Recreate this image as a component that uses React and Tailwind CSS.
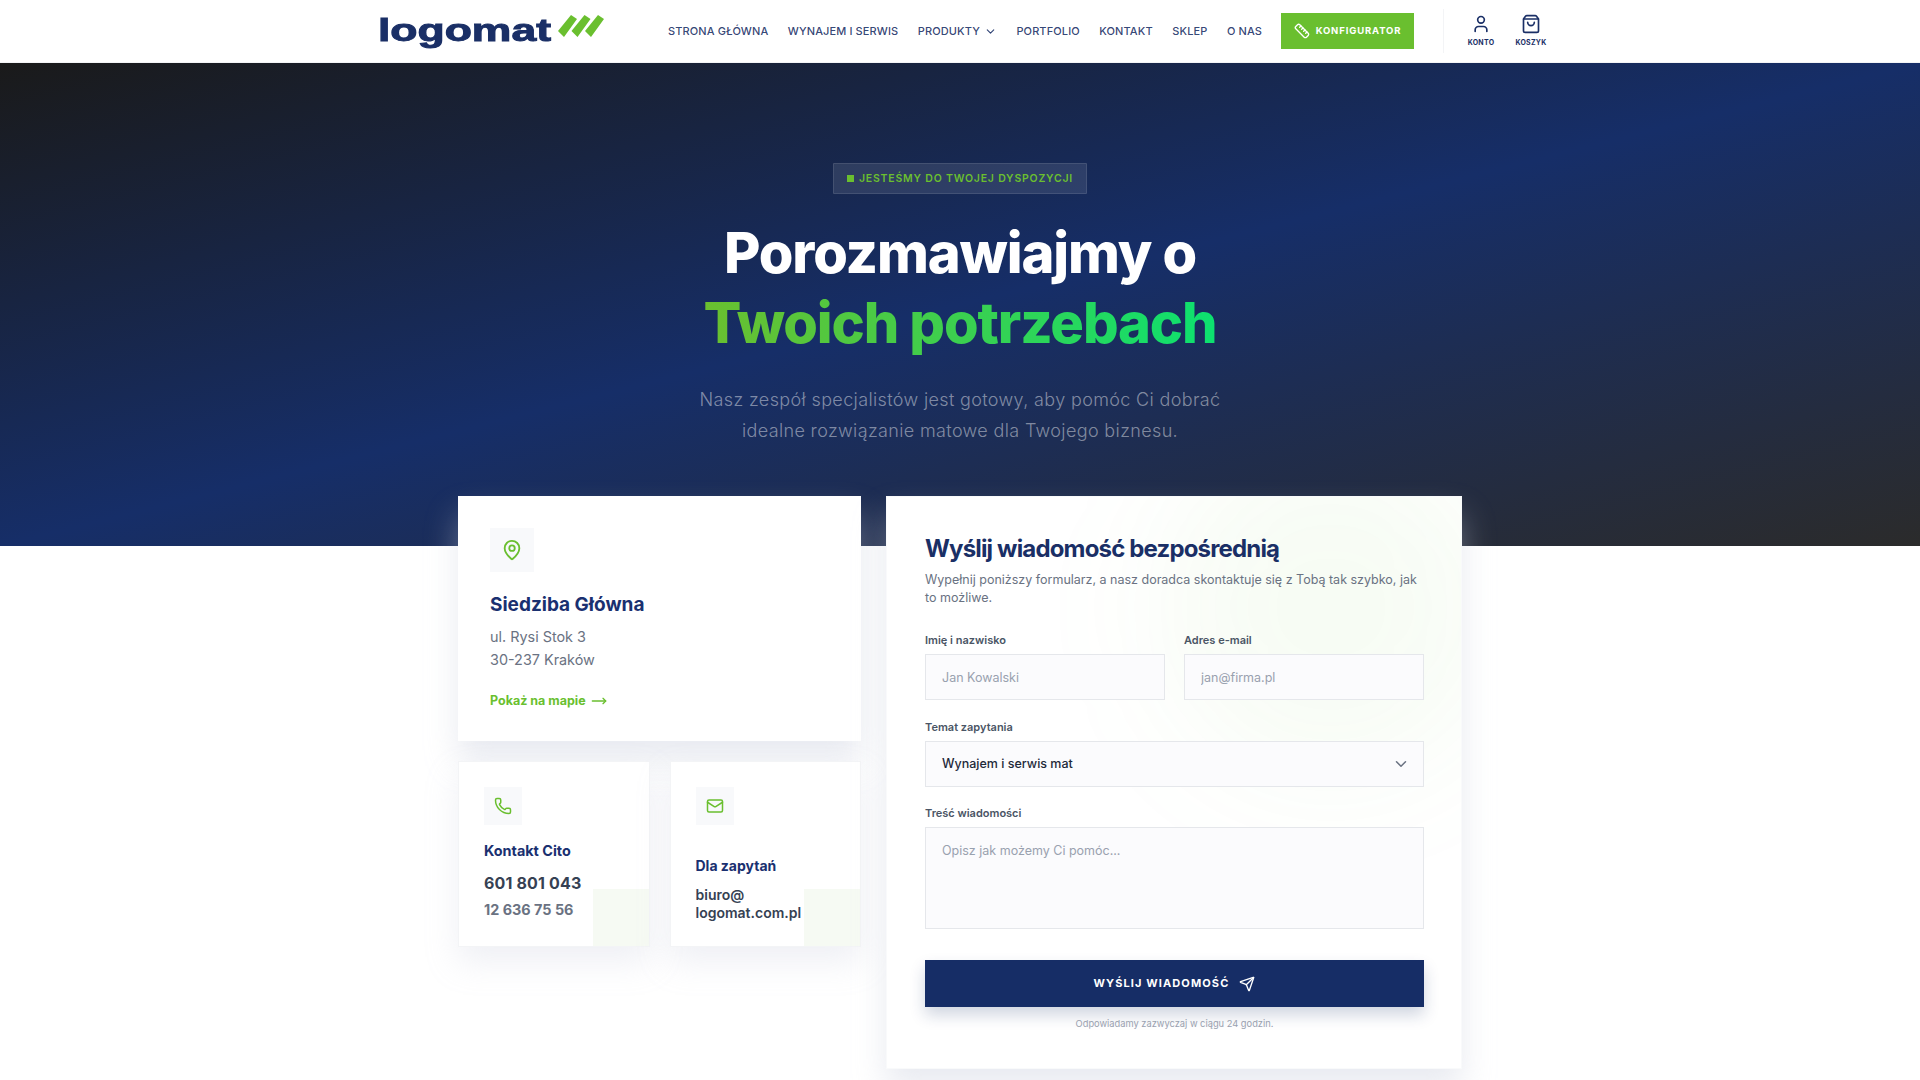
import { ChevronDown, Ruler, User, ShoppingBag, MapPin, MoveRight, Phone, Mail, Send } from "lucide-react";

const links = ["Strona główna", "Wynajem i serwis", "Produkty", "Portfolio", "Kontakt", "Sklep", "O nas"];

function Navbar() {
  return (
    <nav className="h-[63px] bg-white border-b border-gray-100 flex items-center pl-[378px] shrink-0">
      <a className="flex items-center w-[290px] shrink-0 -mt-[3px]">
        <span className="inline-block w-[174px] origin-left scale-x-[1.39] text-[32px] leading-none font-black text-[#1a2f66] [font-family:'Liberation_Sans',sans-serif] [-webkit-text-stroke:1px_#1a2f66]">logomat</span>
        <svg width="46" height="22" viewBox="0 0 46 22" className="ml-[6px] -mt-[7px]">
          <path d="M0 16L13 0l6 4L6 22zM13.500 16l13-16 6 4-13 18zM27 16L40 0l6 4-13 18z" fill="#6abf2f" />
        </svg>
      </a>
      <ul className="flex items-center gap-[19.500px] text-[11px] font-medium text-[#1a2f66]/90 uppercase tracking-[0.01em]">
        {links.map((l) => (
          <li key={l} className="flex items-center gap-1 whitespace-nowrap">
            {l}
            {l === "Produkty" && <ChevronDown size={13} strokeWidth={2} />}
          </li>
        ))}
      </ul>
      <button className="ml-[19px] w-[133px] h-[36px] bg-[#6abf2f] text-white text-[9.500px] font-bold uppercase tracking-[0.09em] flex items-center justify-center gap-[6px]">
        <Ruler size={16} />
        Konfigurator
      </button>
      <div className="ml-[29px] w-px h-[44px] bg-gray-100" />
      <div className="ml-[24px] flex gap-[24px] text-[#1a2f66]">
        <div className="w-[26px] flex flex-col items-center">
          <User size={20} />
          <span className="mt-[4px] text-[7px] font-bold uppercase tracking-[0.04em]">Konto</span>
        </div>
        <div className="w-[26px] flex flex-col items-center">
          <ShoppingBag size={20} />
          <span className="mt-[4px] text-[7px] font-bold uppercase tracking-[0.04em]">Koszyk</span>
        </div>
      </div>
    </nav>
  );
}

function Hero() {
  return (
    <section className="h-[483px] bg-[linear-gradient(to_bottom_right,#1a1a1a,#162e68_50%,#2b2b2b)] flex flex-col items-center pt-[100px] text-center shrink-0">
      <div className="h-[31px] px-[13px] flex items-center border border-white/10 bg-white/10 rounded-[1px] text-[#6abf2f] text-[10.500px] font-semibold uppercase tracking-[0.075em]">
        <span className="w-[7px] h-[7px] bg-[#6abf2f] mr-[5px]" />
        Jesteśmy do Twojej dyspozycji
      </div>
      <h1 className="mt-[24px] text-[56px] leading-[70px] font-extrabold tracking-[-0.02em] text-white">
        Porozmawiajmy o
        <br />
        <span className="bg-[linear-gradient(to_right,#6abf2f,#0ce170)] bg-clip-text text-transparent">Twoich potrzebach</span>
      </h1>
      <p className="mt-[27px] text-[18px] leading-[30.600px] font-light text-white/45 tracking-[0.02em]">
        Nasz zespół specjalistów jest gotowy, aby pomóc Ci dobrać
        <br />
        idealne rozwiązanie matowe dla Twojego biznesu.
      </p>
    </section>
  );
}

function IconBox({ children, big }) {
  return (
    <div className={`bg-[#f8f9fb] flex items-center justify-center text-[#6abf2f] ${big ? "w-[44px] h-[44px]" : "w-[38px] h-[38px]"}`}>
      {children}
    </div>
  );
}

function SmallCard({ icon, children }) {
  return (
    <div className="relative w-[191.500px] h-[186px] bg-white border border-gray-100 shadow-[0_15px_30px_rgba(190,196,215,0.25)] p-[25px] flex flex-col justify-between overflow-hidden">
      <IconBox>{icon}</IconBox>
      <div className="relative z-10">{children}</div>
      <div className="absolute right-0 bottom-0 w-[56px] h-[57px] bg-[#f6faf3]" />
    </div>
  );
}

function ContactColumn() {
  return (
    <div className="w-[403px] flex flex-col gap-[20px]">
      <div className="h-[245px] bg-white shadow-[0_20px_30px_rgba(200,205,220,0.4)] p-[32px]">
        <IconBox big>
          <MapPin size={22} />
        </IconBox>
        <h3 className="mt-[19px] text-[19px] leading-[28px] font-bold text-[#1a3070]">Siedziba Główna</h3>
        <p className="mt-[6px] text-[14.400px] leading-[23px] text-gray-500">
          ul. Rysi Stok 3
          <br />
          30-237 Kraków
        </p>
        <a className="mt-[20px] flex items-center gap-[5px] text-[12.500px] leading-[20px] font-bold text-[#6abf2f]">
          Pokaż na mapie
          <MoveRight size={16} />
        </a>
      </div>
      <div className="flex justify-between">
        <SmallCard icon={<Phone size={18} />}>
          <h4 className="text-[14.400px] leading-[20px] font-bold text-[#1a3070]">Kontakt Cito</h4>
          <p className="mt-[10px] text-[16px] leading-[24px] font-bold text-gray-700 tracking-[0.01em]">601 801 043</p>
          <p className="mt-[4px] text-[14.400px] leading-[22px] font-bold text-gray-500">12 636 75 56</p>
        </SmallCard>
        <SmallCard icon={<Mail size={18} />}>
          <div className="-mb-px">
            <h4 className="text-[14px] leading-[20px] font-bold text-[#1a3070]">Dla zapytań</h4>
            <p className="mt-[10px] text-[14px] leading-[18px] font-semibold text-gray-700">
              biuro@
              <br />
              logomat.com.pl
            </p>
          </div>
        </SmallCard>
      </div>
    </div>
  );
}

const fieldClass = "w-full bg-[#fbfbfd] border border-gray-200 text-[12.500px] outline-none placeholder:text-gray-400 px-[16px] rounded-none";
const labelClass = "block text-[11px] leading-[16px] font-semibold text-gray-600 mb-[6px]";

function ContactForm() {
  return (
    <div className="relative w-[576px] h-[573px] bg-white border border-gray-50 shadow-[0_20px_30px_rgba(200,205,220,0.4)] pl-[38px] pr-[37px] pt-[35px] overflow-hidden">
      <div className="absolute -top-[60px] -right-[40px] w-[340px] h-[340px] rounded-full bg-[#6abf2f]/5 blur-3xl" />
      <div className="relative">
        <h2 className="text-[24px] leading-[34px] font-bold tracking-[-0.035em] text-[#1a2f66]">Wyślij wiadomość bezpośrednią</h2>
        <p className="mt-[5px] text-[12.500px] leading-[18px] text-gray-500">
          Wypełnij poniższy formularz, a nasz doradca skontaktuje się z Tobą tak szybko, jak to możliwe.
        </p>
        <div className="mt-[25px] grid grid-cols-2 gap-x-[19px]">
          <div>
            <label className={labelClass}>Imię i nazwisko</label>
            <input className={`${fieldClass} h-[46px]`} placeholder="Jan Kowalski" />
          </div>
          <div>
            <label className={labelClass}>Adres e-mail</label>
            <input className={`${fieldClass} h-[46px]`} placeholder="jan@firma.pl" />
          </div>
        </div>
        <div className="mt-[19px]">
          <label className={labelClass}>Temat zapytania</label>
          <div className={`${fieldClass} h-[46px] flex items-center justify-between text-gray-800 font-medium !pr-[13px]`}>
            Wynajem i serwis mat
            <ChevronDown size={18} className="text-gray-500" />
          </div>
        </div>
        <div className="mt-[18px]">
          <label className={labelClass}>Treść wiadomości</label>
          <textarea className={`${fieldClass} h-[102px] py-[14px] resize-none block`} placeholder="Opisz jak możemy Ci pomóc..." />
        </div>
        <button className="mt-[31px] w-full h-[47px] bg-[#162d66] text-white text-[11px] font-bold uppercase tracking-[0.1em] flex items-center justify-center gap-[10px] shadow-[0_8px_16px_rgba(22,45,102,0.2)]">
          Wyślij wiadomość
          <Send size={16} />
        </button>
        <p className="mt-[10px] text-center text-[9.300px] leading-[14px] text-gray-400">Odpowiadamy zazwyczaj w ciągu 24 godzin.</p>
      </div>
    </div>
  );
}

export default function App() {
  return (
    <div className="h-[1080px] overflow-hidden bg-white flex flex-col font-['Inter',sans-serif]">
      <Navbar />
      <Hero />
      <main className="-mt-[50px] flex justify-center gap-[25px] items-start">
        <ContactColumn />
        <ContactForm />
      </main>
    </div>
  );
}
